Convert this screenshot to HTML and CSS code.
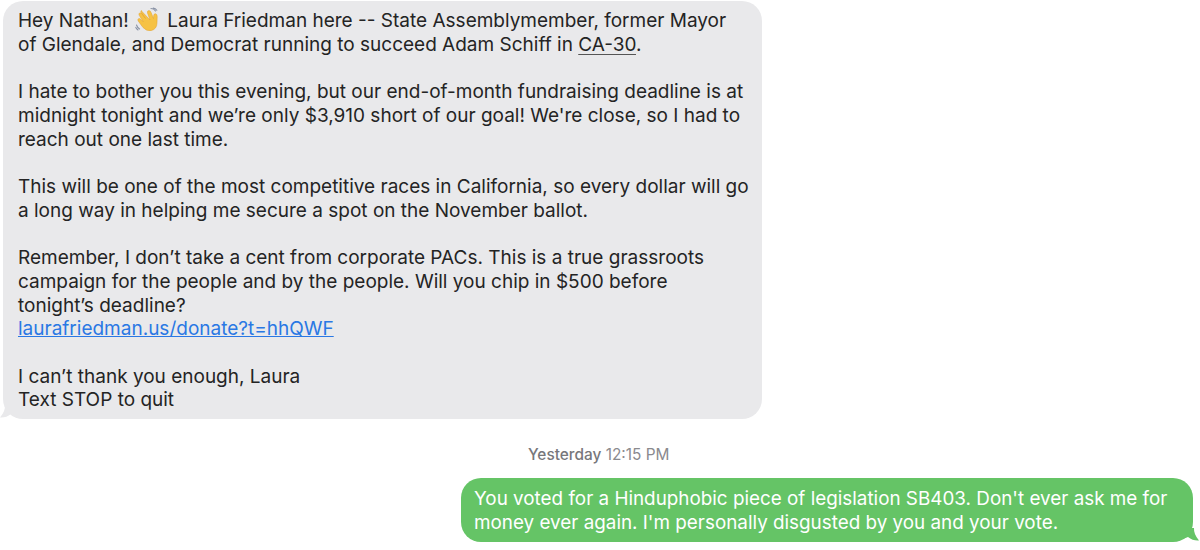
FILE: index.html
```html
<!DOCTYPE html>
<html lang="en">
<head>
  <meta charset="UTF-8">
  <title>Messages</title>
  <link rel="stylesheet" href="styles.css">
</head>
<body>

  <div class="thread">
    <div class="bubble incoming">
      <p>Hey Nathan!
        <svg class="wave" viewBox="0 0 26 26" width="26" height="26" aria-label="waving hand">
          <path d="M7 4.5 L15 13 L12.5 6 Q12 3.5 14 3.5 Q15.5 3.5 16.3 6 L18.5 11.5 L18.7 8.5 Q19 6.3 20.8 6.8 Q22.3 7.3 22.2 9.5 L22 16 Q21.8 22 16.5 23.5 Q11.5 24.6 8 20.5 L3.2 14 Q2.3 12.6 3.4 11.8 Q4.5 11.1 5.6 12.2 L8.2 14.8 L4.2 8.3 Q3.3 6.7 4.6 6 Q5.8 5.4 6.9 6.8 L10.5 11.5 L6.5 6 Q5.2 4 6.2 3.6 Q6.8 3.5 7 4.5 Z" fill="#f6c244" stroke="#e0a030" stroke-width="0.5"/>
          <path d="M16 1.5 Q19 1.5 20.5 4 M18.2 1 Q20.6 1.4 21.8 3.2" fill="none" stroke="#8a93a6" stroke-width="1.1" stroke-linecap="round"/>
          <path d="M1.5 18 Q2.3 20.6 4.6 22 M0.8 20.4 Q1.6 22 3 23" fill="none" stroke="#8a93a6" stroke-width="1.1" stroke-linecap="round"/>
        </svg>
        Laura Friedman here -- State Assemblymember, former Mayor<br>of Glendale, and Democrat running to succeed Adam Schiff in <span class="detected">CA-30</span>.</p>
      <p>I hate to bother you this evening, but our end-of-month fundraising deadline is at<br>midnight tonight and we’re only $3,910 short of our goal! We're close, so I had to<br>reach out one last time.</p>
      <p>This will be one of the most competitive races in California, so every dollar will go<br>a long way in helping me secure a spot on the November ballot.</p>
      <p>Remember, I don’t take a cent from corporate PACs. This is a true grassroots<br>campaign for the people and by the people. Will you chip in $500 before<br>tonight’s deadline?<br><a href="#">laurafriedman.us/donate?t=hhQWF</a></p>
      <p>I can’t thank you enough, Laura<br>Text STOP to quit</p>
      <svg class="tail tail-left" viewBox="0 0 16 14" width="16" height="14"><path d="M11 0 L5 0 Q5.5 6 0 12.5 Q6 13 11 9 L16 11 L16 0 Z" fill="#e9e9eb"/></svg>
    </div>

    <div class="stamp"><b>Yesterday</b> 12:15 PM</div>

    <div class="bubble outgoing">
      <p>You voted for a Hinduphobic piece of legislation SB403. Don't ever ask me for<br>money ever again. I'm personally disgusted by you and your vote.</p>
      <svg class="tail tail-right" viewBox="0 0 16 14" width="16" height="14"><path d="M5 0 L11 0 Q10.5 6 16 12.5 Q10 13 5 9 L0 11 L0 0 Z" fill="#65c466"/></svg>
    </div>
  </div>

</body>
</html>
```

FILE: styles.css
```css
body {
  margin: 0;
  background-color: white;
  font-family: Inter, "Liberation Sans", sans-serif;
  overflow: hidden;
}
.thread {
  display: flex;
  flex-direction: column;
  padding: 1px 7px 0 3px;
}
.bubble {
  position: relative;
  font-size: 19px;
  line-height: 23.7px;
  white-space: nowrap;
  border-radius: 20px;
}
.bubble p {
  margin: 0 0 23.7px 0;
}
.bubble p:last-of-type {
  margin-bottom: 0;
}
.incoming {
  align-self: flex-start;
  box-sizing: border-box;
  width: 759px;
  height: 418px;
  padding: 6px 15px;
  background-color: #e9e9eb;
  color: #242424;
}
.outgoing {
  align-self: flex-end;
  box-sizing: border-box;
  width: 732px;
  height: 64px;
  padding: 9px 13px;
  font-size: 18.85px;
  background-color: #65c466;
  color: white;
}
.wave {
  vertical-align: -6px;
  margin: 0 1px;
}
.detected {
  text-decoration: underline;
  text-decoration-color: #555;
  text-underline-offset: 3px;
  text-decoration-thickness: 1px;
}
a {
  color: #2a78e4;
}
.stamp {
  margin-top: 27px;
  margin-bottom: 14px;
  margin-left: 525px;
  font-size: 15.4px;
  line-height: 18px;
  color: #8a8a8e;
}
.stamp b {
  font-weight: 500;
  color: #77777b;
}
.tail {
  position: absolute;
  bottom: 0;
}
.tail-left {
  left: -3px;
}
.tail-right {
  right: -6px;
}
```
